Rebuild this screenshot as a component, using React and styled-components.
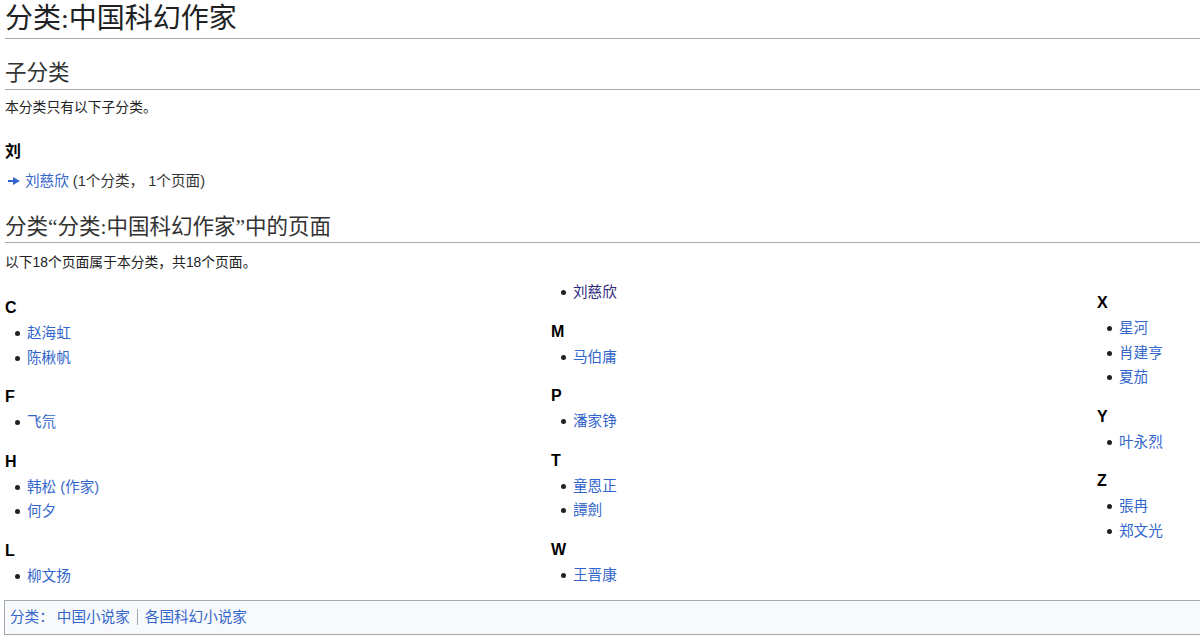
import styled, { createGlobalStyle } from "styled-components";

const GlobalStyle = createGlobalStyle`
  html, body {
    margin: 0;
    padding: 0;
    background: #fff;
    overflow: hidden;
  }
  body {
    font-family: "Liberation Sans", "Noto Sans CJK SC", sans-serif;
    color: #202122;
  }
`;

const Page = styled.div`
  width: calc(100% + 10px);
  padding-left: 5px;
  box-sizing: border-box;
`;

const Title = styled.h1`
  margin: 0;
  padding: 1px 0 1px;
  height: 36px;
  font-family: "Liberation Serif", "Noto Sans CJK SC", serif;
  font-weight: normal;
  font-size: 28px;
  line-height: 36px;
  color: #202122;
  border-bottom: 1px solid #a2a9b1;
`;

const SectionTitle = styled.h2`
  margin: ${(p) => p.$top}px 0 0;
  height: 28px;
  padding-bottom: ${(p) => p.$pad}px;
  font-family: "Liberation Serif", "Noto Sans CJK SC", serif;
  font-weight: normal;
  font-size: 21.5px;
  line-height: 28px;
  color: #333;
  border-bottom: 1px solid #a2a9b1;
`;

const Note = styled.p`
  margin: ${(p) => p.$top}px 0 0;
  height: 22px;
  font-size: 13.8px;
  line-height: 22px;
`;

const GroupHead = styled.h3`
  margin: ${(p) => p.$top ?? 14}px 0 0;
  height: 26px;
  font-size: 16px;
  font-weight: bold;
  line-height: 26px;
  color: #000;
`;

const SubRow = styled.div`
  margin-top: 5px;
  height: 22px;
  display: flex;
  align-items: center;
  font-size: 14.6px;
  line-height: 22px;
  padding-left: 3px;
  color: #333;
`;

const Arrow = styled.svg`
  width: 12px;
  height: 8px;
  margin-right: 5px;
  flex: none;
`;

const Link = styled.a`
  color: ${(p) => (p.$visited ? "#2d2a7e" : "#3366cc")};
  text-decoration: none;
`;

const Columns = styled.div`
  margin-top: 6px;
  display: grid;
  grid-template-columns: repeat(3, 546px);
  align-items: start;
`;

const Column = styled.div`
  display: flex;
  flex-direction: column;
`;

const List = styled.ul`
  margin: 0;
  padding: 0 0 0 22px;
  list-style: none;
`;

const Item = styled.li`
  position: relative;
  height: 24.5px;
  font-size: 14.6px;
  line-height: 24.5px;

  &::before {
    content: "";
    position: absolute;
    left: -12px;
    top: 10px;
    width: 5px;
    height: 5px;
    border-radius: 50%;
    background: #202122;
  }
`;

const CatBox = styled.div`
  margin: 12px 0 0 -1px;
  padding: 5px 5px 6px;
  height: 22px;
  display: flex;
  align-items: center;
  border: 1px solid #a2a9b1;
  background: #f8f9fa;
  font-size: 14.6px;
  line-height: 22px;
`;

const CatLabel = styled(Link)`
  margin-right: 3px;
`;

const CatLink = styled(Link)`
  padding: 0 7px;
  border-left: ${(p) => (p.$first ? "none" : "1px solid #a2a9b1")};
  line-height: 16px;
  ${(p) => p.$first && "padding-left: 0;"}
`;

const columns = [
  {
    lead: 15,
    groups: [
      { letter: "C", items: ["赵海虹", "陈楸帆"] },
      { letter: "F", items: ["飞氘"] },
      { letter: "H", items: ["韩松 (作家)", "何夕"] },
      { letter: "L", items: ["柳文扬"] },
    ],
  },
  {
    lead: 0,
    groups: [
      { letter: null, items: ["刘慈欣"], visited: true },
      { letter: "M", items: ["马伯庸"] },
      { letter: "P", items: ["潘家铮"] },
      { letter: "T", items: ["童恩正", "譚劍"] },
      { letter: "W", items: ["王晋康"] },
    ],
  },
  {
    lead: 10,
    groups: [
      { letter: "X", items: ["星河", "肖建亨", "夏茄"] },
      { letter: "Y", items: ["叶永烈"] },
      { letter: "Z", items: ["張冉", "郑文光"] },
    ],
  },
];

export default function App() {
  return (
    <Page>
      <GlobalStyle />
      <Title>分类:中国科幻作家</Title>

      <SectionTitle $top={20} $pad={2}>子分类</SectionTitle>
      <Note $top={7}>本分类只有以下子分类。</Note>
      <GroupHead $top={20}>刘</GroupHead>
      <SubRow>
        <Arrow viewBox="0 0 12 8">
          <rect x="0" y="3" width="6" height="2" fill="#36c" />
          <path d="M5 0 L12 4 L5 8 Z" fill="#36c" />
        </Arrow>
        <Link href="#">刘慈欣</Link>
        &nbsp;(1个分类， 1个页面)
      </SubRow>

      <SectionTitle $top={21} $pad={1}>分类“分类:中国科幻作家”中的页面</SectionTitle>
      <Note $top={9}>以下18个页面属于本分类，共18个页面。</Note>

      <Columns>
        {columns.map((col, ci) => (
          <Column key={ci}>
            {col.groups.map((g, gi) => (
              <div key={gi}>
                {g.letter && (
                  <GroupHead $top={gi === 0 ? col.lead : 14}>{g.letter}</GroupHead>
                )}
                <List>
                  {g.items.map((name) => (
                    <Item key={name}>
                      <Link href="#" $visited={g.visited}>{name}</Link>
                    </Item>
                  ))}
                </List>
              </div>
            ))}
          </Column>
        ))}
      </Columns>

      <CatBox>
        <CatLabel href="#">分类：</CatLabel>
        <CatLink href="#" $first>中国小说家</CatLink>
        <CatLink href="#">各国科幻小说家</CatLink>
      </CatBox>
    </Page>
  );
}
